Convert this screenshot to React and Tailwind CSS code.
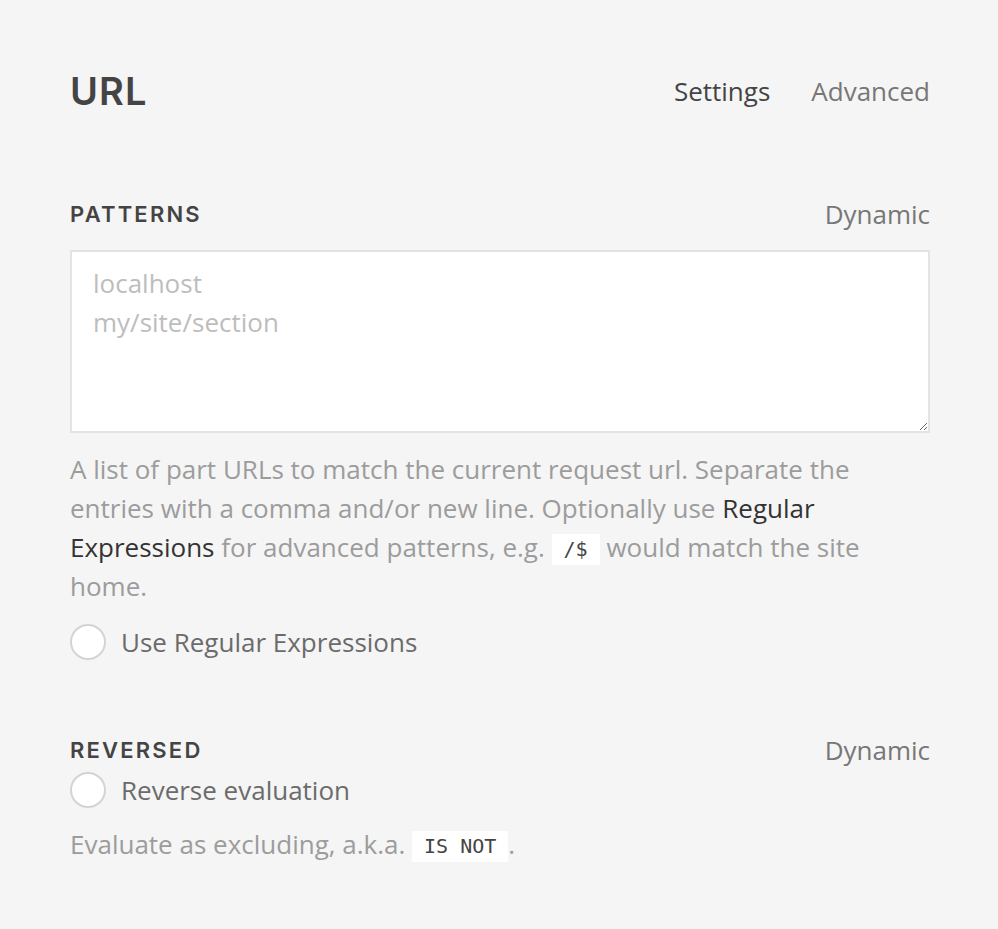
import React from "react";

const heading = "font-['Inter',sans-serif] font-semibold text-[#444]";

const Radio = ({ label }) => (
  <label className="flex items-center gap-[15px] h-9 cursor-pointer">
    <span className="w-9 h-9 rounded-full border-2 border-[#d4d4d4] bg-white shrink-0" />
    <span className="text-[#6b6b6b]">{label}</span>
  </label>
);

const Code = ({ children }) => (
  <code className="inline-block bg-white px-[12px] font-['DejaVu_Sans_Mono',monospace] text-[20px] leading-[31px] text-[#444] align-[1px]">
    {children}
  </code>
);

const SectionHeader = ({ title }) => (
  <div className="flex items-center justify-between h-8">
    <h2 className={`${heading} text-[22px] tracking-[0.1em]`}>{title}</h2>
    <span className="text-[#777]">Dynamic</span>
  </div>
);

export default function App() {
  return (
    <div className="min-h-screen bg-[#f5f5f5] pl-[70px] pr-[68px] pt-[69px] font-['Open_Sans',sans-serif] text-[26px]">
      <div className="flex items-center justify-between h-11">
        <h1 className={`${heading} text-[38px] tracking-[0.03em]`}>URL</h1>
        <nav className="flex gap-[41px]">
          <span className="text-[#444]">Settings</span>
          <span className="text-[#777]">Advanced</span>
        </nav>
      </div>

      <div className="mt-[85px]">
        <SectionHeader title="PATTERNS" />
        <textarea
          className="mt-5 block w-full h-[183px] bg-white border-2 border-[#e3e3e3] px-[21px] py-[12px] leading-[39px] text-[#444] placeholder:text-[#bdbdbd] outline-none"
          placeholder={"localhost\nmy/site/section"}
        />
        <p className="mt-[17px] leading-[39px] text-[#9c9c9c]">
          A list of part URLs to match the current request url. Separate the
          entries with a comma and/or new line. Optionally use{" "}
          <a className="text-[#333]">Regular Expressions</a> for advanced
          patterns, e.g. <Code>/$</Code> would match the site home.
        </p>
        <div className="mt-[18px]">
          <Radio label="Use Regular Expressions" />
        </div>
      </div>

      <div className="mt-[74px]">
        <SectionHeader title="REVERSED" />
        <div className="mt-[6px]">
          <Radio label="Reverse evaluation" />
        </div>
        <p className="mt-[17px] leading-[39px] text-[#9c9c9c]">
          Evaluate as excluding, a.k.a. <Code>IS NOT</Code>.
        </p>
      </div>
    </div>
  );
}
